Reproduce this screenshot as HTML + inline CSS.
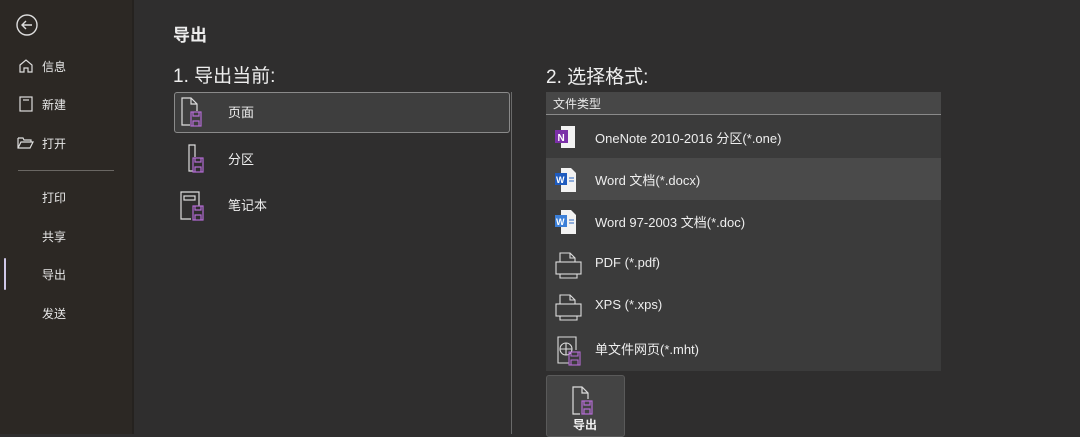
<!DOCTYPE html><html><head><meta charset="utf-8"><style>
*{margin:0;padding:0;box-sizing:border-box}
body{width:1080px;height:434px;overflow:hidden;background:#2f2e2e;font-family:"Liberation Sans","Noto Sans CJK SC",sans-serif;color:#e8e8e8;position:relative}
.side{position:absolute;left:0;top:0;width:134px;height:434px;background:#2c2824;border-right:2px solid #25221f}
.abs{position:absolute}
.nav{position:absolute;font-size:12px;color:#e6e6e6}
.t{position:absolute;font-size:13px;color:#eee}
.row{position:absolute;left:546px;width:395px;height:42px;background:#3b3b3b}
.row span{position:absolute;left:49px;top:12px;font-size:13px;color:#eee}
.row svg{position:absolute;left:8px;top:8px}
</style></head><body>
<div class="side">
<svg class="abs" style="left:15px;top:13px" width="24" height="24" viewBox="0 0 24 24" fill="none" stroke="#ddd" stroke-width="1.4"><circle cx="12" cy="12" r="10"/><path d="M17 12H7M11 8l-4 4 4 4"/></svg>
<svg class="abs" style="left:18px;top:58px" width="16" height="16" viewBox="0 0 16 16" fill="none" stroke="#ddd" stroke-width="1.2"><path d="M2 7L8 2l6 5v7H10V10H6v4H2z"/></svg>
<div class="nav" style="left:42px;top:58px">信息</div>
<svg class="abs" style="left:19px;top:96px" width="14" height="16" viewBox="0 0 14 16" fill="none" stroke="#ddd" stroke-width="1.2"><rect x="1" y="1" width="12" height="14"/><path d="M4 4h6"/></svg>
<div class="nav" style="left:42px;top:96px">新建</div>
<svg class="abs" style="left:17px;top:136px" width="17" height="14" viewBox="0 0 17 14" fill="none" stroke="#ddd" stroke-width="1.2"><path d="M1 2h5l1 2h7v2M1 2v10h12l3-6H4L1 12"/></svg>
<div class="nav" style="left:42px;top:135px">打开</div>
<div class="abs" style="left:18px;top:170px;width:96px;height:1px;background:#6a6763"></div>
<div class="nav" style="left:42px;top:189px">打印</div>
<div class="nav" style="left:42px;top:228px">共享</div>
<div class="abs" style="left:4px;top:258px;width:2px;height:32px;background:#cfc8e8;border-radius:1px"></div>
<div class="nav" style="left:42px;top:266px">导出</div>
<div class="nav" style="left:42px;top:305px">发送</div>
</div>
<div class="t" style="left:173px;top:21px;font-size:17px;font-weight:bold">导出</div>
<div class="t" style="left:173px;top:61px;font-size:19px">1. 导出当前:</div>
<div class="abs" style="left:174px;top:92px;width:336px;height:41px;border:1px solid #8a8a8a;border-radius:3px;background:#3e3e3e"></div>
<div class="abs" style="left:511px;top:92px;width:1px;height:342px;background:#6a6a6a"></div>
<svg class="abs" style="left:180px;top:96px" width="32" height="34" viewBox="0 0 32 34" fill="none" stroke-width="1.2"><path d="M10 29H2V2h9l6 6v7" stroke="#ddd"/><path d="M11 2v6h6" stroke="#ddd"/><rect x="11" y="16" width="10" height="14" stroke="#b46cd4"/><path d="M13 16v4h6v-4M13 30v-5h6v5" stroke="#b46cd4"/></svg>
<div class="t" style="left:228px;top:102px">页面</div>
<svg class="abs" style="left:180px;top:141px" width="32" height="36" viewBox="0 0 32 36" fill="none" stroke-width="1.2"><path d="M13 30H9V4h6v12" stroke="#ddd"/><rect x="13" y="17" width="10" height="14" stroke="#b46cd4"/><path d="M15 17v4h6v-4M15 31v-5h6v5" stroke="#b46cd4"/></svg>
<div class="t" style="left:228px;top:149px">分区</div>
<svg class="abs" style="left:178px;top:188px" width="34" height="36" viewBox="0 0 34 36" fill="none" stroke-width="1.2"><path d="M13 31H3V4h18v14" stroke="#ddd"/><rect x="6" y="8" width="11" height="4" stroke="#ddd"/><rect x="15" y="18" width="10" height="14" stroke="#b46cd4"/><path d="M17 18v4h6v-4M17 32v-5h6v5" stroke="#b46cd4"/></svg>
<div class="t" style="left:228px;top:195px">笔记本</div>
<div class="t" style="left:546px;top:62px;font-size:19px">2. 选择格式:</div>
<div class="abs" style="left:546px;top:92px;width:395px;height:23px;background:#474747;border-bottom:1px solid #8a8a8a"><span style="position:absolute;left:7px;top:3px;font-size:12px">文件类型</span></div>
<div class="abs" style="left:546px;top:115px;width:395px;height:256px;background:#3b3b3b"></div>
<div class="row" style="top:116px"><svg width="30" height="28" viewBox="0 0 30 28"><rect x="7" y="2" width="14" height="22" fill="#f2f2f2"/><rect x="1" y="6" width="13" height="13" fill="#7b2fa8"/><text x="3.5" y="17" font-size="10" font-weight="bold" fill="#fff" font-family="Liberation Sans">N</text></svg><span>OneNote 2010-2016 分区(*.one)</span></div>
<div class="row" style="top:158px;background:#4a4a4a"><svg width="30" height="28" viewBox="0 0 30 28"><path d="M7 2h10l5 5v19H7z" fill="#f2f2f2"/><path d="M15 12h5M15 15h5" stroke="#2b66c2"/><rect x="1" y="7" width="12" height="12" fill="#1e5bbf"/><text x="2" y="17" font-size="9" font-weight="bold" fill="#fff" font-family="Liberation Sans">W</text></svg><span>Word 文档(*.docx)</span></div>
<div class="row" style="top:200px"><svg width="30" height="28" viewBox="0 0 30 28"><path d="M7 2h10l5 5v19H7z" fill="#f2f2f2"/><path d="M15 12h5M15 15h5" stroke="#2b66c2"/><rect x="1" y="7" width="12" height="12" fill="#3b7fd8"/><text x="2" y="17" font-size="9" font-weight="bold" fill="#fff" font-family="Liberation Sans">W</text></svg><span>Word 97-2003 文档(*.doc)</span></div>
<div class="row" style="top:243px"><svg width="30" height="30" viewBox="0 0 30 30" fill="none" stroke="#ddd" stroke-width="1.1"><path d="M6 11V2h10l5 5v4M16 2v5h5"/><rect x="2" y="11" width="25" height="12"/><path d="M6 23v4h17v-4"/></svg><span>PDF (*.pdf)</span></div>
<div class="row" style="top:285px"><svg width="30" height="30" viewBox="0 0 30 30" fill="none" stroke="#ddd" stroke-width="1.1"><path d="M6 11V2h10l5 5v4M16 2v5h5"/><rect x="2" y="11" width="25" height="12"/><path d="M6 23v4h17v-4"/></svg><span>XPS (*.xps)</span></div>
<div class="row" style="top:327px;height:43px"><svg width="32" height="32" viewBox="0 0 32 32" fill="none" stroke-width="1.1"><path d="M15 28H4V2h18v13" stroke="#ddd"/><circle cx="12" cy="14" r="6" stroke="#ddd"/><path d="M6 14h12M12 8v12" stroke="#ddd"/><rect x="15" y="17" width="11" height="13" stroke="#b46cd4"/><path d="M17 17v4h7v-4M17 30v-5h7v5" stroke="#b46cd4"/></svg><span>单文件网页(*.mht)</span></div>
<div class="abs" style="left:546px;top:375px;width:79px;height:62px;background:#444;border:1px solid #5a5a5a;border-radius:3px"></div>
<svg class="abs" style="left:570px;top:385px" width="32" height="34" viewBox="0 0 32 34" fill="none" stroke-width="1.2"><path d="M10 29H3V2h9l6 6v6" stroke="#ddd"/><path d="M12 2v6h6" stroke="#ddd"/><rect x="12" y="16" width="10" height="13" stroke="#b46cd4"/><path d="M14 16v4h6v-4M14 29v-5h6v5" stroke="#b46cd4"/></svg>
<div class="t" style="left:573px;top:416px;font-size:12px;font-weight:bold">导出</div>
</body></html>
